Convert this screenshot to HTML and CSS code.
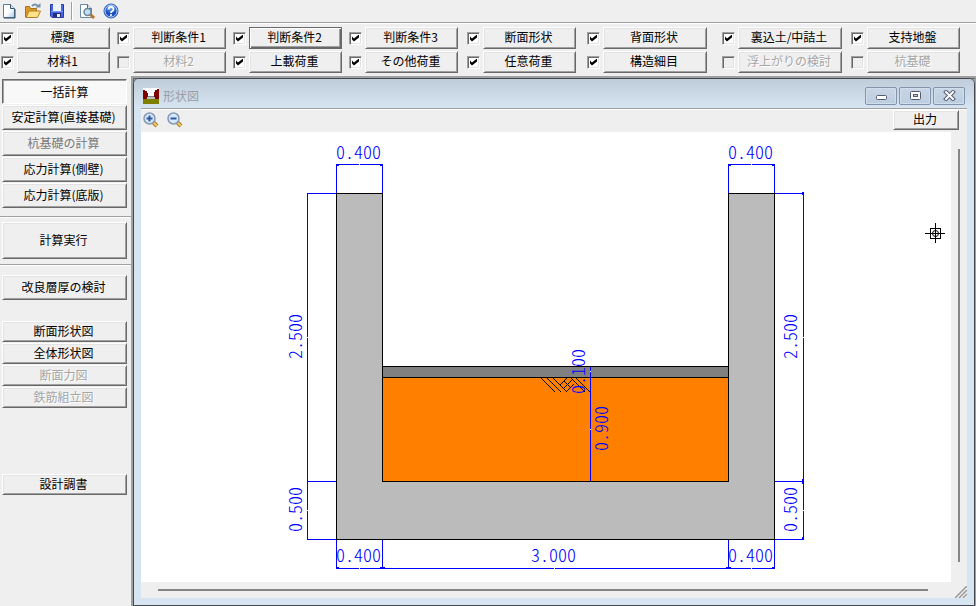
FILE: index.html
```html
<!DOCTYPE html>
<html lang="ja">
<head>
<meta charset="utf-8">
<title>形状図</title>
<link rel="stylesheet" href="styles.css">
</head>
<body>
<header class="toolbar">
  <button class="tool" aria-label="新規"><svg width="16" height="16" viewBox="0 0 16 16"><defs><linearGradient id="pg" x1="0" y1="0" x2="1" y2="1"><stop offset="0" stop-color="#fff"/><stop offset=".5" stop-color="#fff"/><stop offset="1" stop-color="#a9c6e4"/></linearGradient></defs><path d="M2.500 1.500h7l4 4v9h-11z" fill="url(#pg)" stroke="#5d7f9c"/><path d="M3 15h11V6" fill="none" stroke="#28465f"/><path d="M9.500 1.500v4h4" fill="#d7e8f5" stroke="#34546e"/></svg></button>
  <button class="tool" aria-label="開く"><svg width="16" height="16" viewBox="0 0 16 16"><path d="M.5 14V3.500h4l1 2h6V14z" fill="#d99a28" stroke="#a8721c"/><path d="M1 14.500 4 8h11.500l-3 6.500z" fill="#ffe188" stroke="#b67f22"/><path d="M7 3q3-3 6 0" fill="none" stroke="#7892a8" stroke-width="2"/><path d="M10.500 4.500h5V0z" fill="#7892a8"/></svg></button>
  <button class="tool" aria-label="保存"><svg width="16" height="16" viewBox="0 0 16 16"><path d="M1.500 1.500h13v13H3l-1.500-1.500z" fill="#4664e8" stroke="#283a9c"/><path d="M4 1h8v7H4z" fill="#eef4fc"/><path d="M2 8.500h12" stroke="#7994ff"/><path d="M4 10h8v4H4z" fill="#242e70"/><path d="M8 11h3v3H8z" fill="#e8eefb"/></svg></button>
  <span class="divider"></span>
  <button class="tool" aria-label="印刷プレビュー"><svg width="16" height="16" viewBox="0 0 16 16"><path d="M1.500 1.500h7l4 4v9h-11z" fill="#fcfdff" stroke="#6b8ba5"/><path d="M8.500 1.500v4h4" fill="#d7e8f5" stroke="#4c6b84"/><path d="m11 11 4 4" stroke="#bb7428" stroke-width="3"/><circle cx="8.500" cy="9" r="3.500" fill="#bee1f7" stroke="#6f8799" stroke-width="1.500"/></svg></button>
  <button class="tool" aria-label="ヘルプ"><svg width="16" height="16" viewBox="0 0 16 16"><defs><radialGradient id="hb" cy=".2"><stop offset="0" stop-color="#72b5ff"/><stop offset="1" stop-color="#174ec0"/></radialGradient></defs><circle cx="8" cy="8" r="7" fill="url(#hb)" stroke="#315caa"/><circle cx="8" cy="8" r="6" fill="none" stroke="#b9d6fb"/><path d="M5.500 6.500Q5.500 4 8 4t2.500 2.200Q10.500 7.500 9 8.200 8 8.800 8 10" fill="none" stroke="#fff" stroke-width="1.800"/><circle cx="8" cy="12" r="1.100" fill="#fff"/></svg></button>
</header>

<section class="conditions">
  <div class="cond"><input type="checkbox" aria-label="標題" checked><button class="btn">標題</button></div>
  <div class="cond"><input type="checkbox" aria-label="判断条件1" checked><button class="btn">判断条件1</button></div>
  <div class="cond"><input type="checkbox" aria-label="判断条件2" checked><button class="btn focused">判断条件2</button></div>
  <div class="cond"><input type="checkbox" aria-label="判断条件3" checked><button class="btn">判断条件3</button></div>
  <div class="cond"><input type="checkbox" aria-label="断面形状" checked><button class="btn">断面形状</button></div>
  <div class="cond wide"><input type="checkbox" aria-label="背面形状" checked><button class="btn">背面形状</button></div>
  <div class="cond wide"><input type="checkbox" aria-label="裏込土/中詰土" checked><button class="btn">裏込土/中詰土</button></div>
  <div class="cond"><input type="checkbox" aria-label="支持地盤" checked><button class="btn">支持地盤</button></div>
  <div class="cond"><input type="checkbox" aria-label="材料1" checked><button class="btn">材料1</button></div>
  <div class="cond"><input type="checkbox" aria-label="材料2" disabled><button class="btn" disabled>材料2</button></div>
  <div class="cond"><input type="checkbox" aria-label="上載荷重" checked><button class="btn">上載荷重</button></div>
  <div class="cond"><input type="checkbox" aria-label="その他荷重" checked><button class="btn">その他荷重</button></div>
  <div class="cond"><input type="checkbox" aria-label="任意荷重" checked><button class="btn">任意荷重</button></div>
  <div class="cond wide"><input type="checkbox" aria-label="構造細目" checked><button class="btn">構造細目</button></div>
  <div class="cond wide"><input type="checkbox" aria-label="浮上がりの検討" disabled><button class="btn" disabled>浮上がりの検討</button></div>
  <div class="cond"><input type="checkbox" aria-label="杭基礎" disabled><button class="btn" disabled>杭基礎</button></div>
</section>

<main class="workspace">
  <nav class="sidebar">
    <div class="group calc">
      <button class="btn pressed">一括計算</button>
      <button class="btn">安定計算(直接基礎)</button>
      <button class="btn inactive">杭基礎の計算</button>
      <button class="btn">応力計算(側壁)</button>
      <button class="btn">応力計算(底版)</button>
    </div>
    <div class="group run"><button class="btn">計算実行</button></div>
    <div class="group review"><button class="btn">改良層厚の検討</button></div>
    <div class="group figures">
      <button class="btn">断面形状図</button>
      <button class="btn">全体形状図</button>
      <button class="btn" disabled>断面力図</button>
      <button class="btn" disabled>鉄筋組立図</button>
    </div>
    <div class="group report"><button class="btn">設計調書</button></div>
  </nav>

  <div class="mdi">
    <section class="window">
      <header class="titlebar">
        <svg class="appicon" width="16" height="16" viewBox="0 0 16 16" shape-rendering="crispEdges"><path d="M0 0h16v16H0z" fill="#fff"/><path d="M0 2h2v1h2v2h1v4H4v2H0zM16 1h-2v1h-2v2h-1v5h1v2h4z" fill="#800000"/><path d="M4 9h8v2H4z" fill="#b9bec4"/><path d="M5 8h6v1H5z" fill="#80858b"/><path d="M0 11h16v5H0z" fill="#808000"/></svg>
        <h1>形状図</h1>
        <div class="winbtns">
          <button aria-label="最小化"><svg width="13" height="11" viewBox="0 0 13 11"><rect x="1.500" y="5.500" width="10" height="4" rx="1" fill="#fff" stroke="#535b70"/></svg></button>
          <button aria-label="最大化"><svg width="13" height="11" viewBox="0 0 13 11"><rect x="1.500" y="1.500" width="10" height="8" rx="1" fill="#fff" stroke="#535b70"/><rect x="4.500" y="4.500" width="4" height="2" fill="#b8cbe0" stroke="#535b70"/></svg></button>
          <button aria-label="閉じる"><svg width="13" height="11" viewBox="0 0 13 11"><path d="m3 2 7 7m0-7-7 7" stroke="#535b70" stroke-width="4" stroke-linecap="square"/><path d="m3 2 7 7m0-7-7 7" stroke="#fff" stroke-width="2" stroke-linecap="square"/></svg></button>
        </div>
      </header>
      <div class="client">
        <div class="viewbar">
          <button class="tool" aria-label="拡大"><svg width="16" height="16" viewBox="0 0 16 16"><path d="m10 10 4 4" stroke="#a87828" stroke-width="4"/><path d="m10 10 4 4" stroke="#f1cd5d" stroke-width="2"/><circle cx="6.500" cy="6.500" r="5.500" fill="#d5e9fc" stroke="#8598b4" stroke-width="1.500"/><path d="M3.500 6.500h6m-3-3v6" stroke="#31579c" stroke-width="2"/></svg></button>
          <button class="tool" aria-label="縮小"><svg width="16" height="16" viewBox="0 0 16 16"><path d="m10 10 4 4" stroke="#a87828" stroke-width="4"/><path d="m10 10 4 4" stroke="#f1cd5d" stroke-width="2"/><circle cx="6.500" cy="6.500" r="5.500" fill="#d5e9fc" stroke="#8598b4" stroke-width="1.500"/><path d="M3.500 6.500h6" stroke="#31579c" stroke-width="2"/></svg></button>
          <button class="btn output">出力</button>
        </div>
        <div class="view">
          <svg class="drawing" viewBox="141 132 810 450" role="img" aria-label="形状図">
            <g class="solid">
              <path class="concrete" d="M336.500 193.500h46v288h346v-288h46v346h-438z"/>
              <path class="slab" d="M382.500 366.500h346v11h-346z"/>
              <path class="fill" d="M382.500 377.500h346v104h-346z"/>
            </g>
            <path class="hatch" d="m541 378 14 14m-8-14 14 14m-8-14 14 14m4-14 14 14m-9-14 14 14M560 385l7-7m-4 11 9-9m-6 12 8-8m-14 1 6 6m-2-10 6 6"/>
            <g class="dims">
              <path d="M336.500 193v-28.500h46V193M728.500 193v-28.500h46V193"/>
              <path d="M336 193.500h-28.500v346H336M307 481.500h29"/>
              <path d="M775 193.500h28.500v346H775M775 481.500h29"/>
              <path d="M336.500 540v28.500h438V540M382.500 540v28M728.500 540v28"/>
              <path d="M590.500 367v114"/>
              <path class="ends" d="M336 165h3m41 0h3m345 0h3m41 0h3M336 568h3m41 0h5m341 0h5m41 0h3M803 195v-3m0 287v5m0 53v3"/>
            </g>
            <path class="breaks" d="M359 164.500h1m391 0h1M359 568.500h1m194 0h1m196 0h1M307.500 337v1m0 172v1M803.500 337v1m0 172v1M590.500 371v1m0 57v1"/>
            <g class="values">
              <text x="336" y="159">0.400</text><text x="728" y="159">0.400</text>
              <text x="336" y="562">0.400</text><text x="531" y="562">3.000</text><text x="728" y="562">0.400</text>
              <text transform="translate(302 359) rotate(-90)">2.500</text>
              <text transform="translate(302 532) rotate(-90)">0.500</text>
              <text transform="translate(797 359) rotate(-90)">2.500</text>
              <text transform="translate(797 532) rotate(-90)">0.500</text>
              <text transform="translate(585 394) rotate(-90)">0.100</text>
              <text transform="translate(608 451) rotate(-90)">0.900</text>
            </g>
            <path class="cursor" d="M925 233.500h20M935.500 223v20M930.500 228.500h10v10h-10z"/>
            <circle class="cursor" cx="935.500" cy="233.500" r="3"/>
          </svg>
          <div class="vscroll"></div>
          <div class="hscroll"></div>
          <svg class="grip" width="12" height="12" viewBox="0 0 12 12"><path d="M0 12 12 0M4 12l8-8M8 12l4-4" stroke="#999" stroke-width="1.500"/></svg>
        </div>
      </div>
    </section>
  </div>
</main>
</body>
</html>
```
FILE: styles.css
```css
* { box-sizing: border-box; }

body {
  margin: 0;
  min-height: 100vh;
  display: flex;
  flex-direction: column;
  background: #efefef;
  color: #000;
  font: 12px/16px "Liberation Sans", "Noto Sans CJK JP", sans-serif;
}

button { font: inherit; color: inherit; padding: 0; }

.btn {
  background: #efefef;
  border: 1px solid;
  border-color: #fff #696969 #696969 #fff;
  box-shadow: inset 1px 1px #e3e3e3, inset -1px -1px #a0a0a0;
  padding: 0 2px 2px 0;
  white-space: nowrap;
  font-family: "Noto Sans CJK JP", sans-serif;
  line-height: 16px;
}
.btn:disabled { color: #a5a5a5; text-shadow: 1px 1px #fff; }
.btn.inactive { color: #787878; }
.btn.focused {
  border-color: #696969;
  box-shadow: inset 1px 1px #fff, inset -1px -1px #696969, inset -2px -2px #a0a0a0;
}
.btn.pressed {
  padding: 0;
  background: #f8f8f8;
  border-color: #696969 #fff #fff #696969;
  box-shadow: inset 1px 1px #a0a0a0;
}

.tool { border: 0; background: none; width: 16px; height: 16px; }
.tool svg { display: block; }

.toolbar {
  height: 24px;
  flex: none;
  display: flex;
  align-items: center;
  gap: 8px;
  padding: 0 1px 2px;
  border-bottom: 1px solid #fff;
  box-shadow: inset 0 -1px #a0a0a0;
}
.divider { width: 2px; height: 18px; background: #a0a0a0; border-right: 1px solid #fff; margin: 0 -2px 0 -2px; }

.conditions {
  display: grid;
  grid-template-columns: 116fr 116fr 116fr 118fr 120fr 135fr 129fr 125fr;
  grid-auto-rows: 22px;
  row-gap: 2px;
  padding: 3px 0 3px 1px;
}
.cond { display: grid; grid-template-columns: 16px 93px; align-items: center; }
.cond.wide { grid-template-columns: 16px 104px; }
.cond .btn { height: 22px; }

input[type="checkbox"] {
  appearance: none;
  width: 13px;
  height: 13px;
  margin: 0;
  background: #fff;
  border: 1px solid;
  border-color: #a0a0a0 #fff #fff #a0a0a0;
  box-shadow: inset 1px 1px #696969, inset -1px -1px #e3e3e3;
}
input[type="checkbox"]:checked::before {
  content: "";
  display: block;
  width: 7px;
  height: 7px;
  margin: 2px;
  background: #000;
  clip-path: polygon(0 28%, 28% 58%, 100% 0, 100% 42%, 28% 100%, 0 72%);
}
input[type="checkbox"]:disabled { background: #efefef; }

.workspace { flex: 1; display: flex; }

.sidebar { width: 131px; flex: none; padding-top: 3px; }
.group { display: grid; padding: 0 4px 0 2px; }
.calc { grid-auto-rows: 25px; gap: 1px; padding-bottom: 8px; }
.run { grid-auto-rows: 37px; padding-top: 5px; padding-bottom: 5px; border: solid #a0a0a0; border-width: 1px 0; box-shadow: inset 0 1px #fff, 0 1px #fff; }
.review { grid-auto-rows: 25px; margin-top: 10px; }
.figures { grid-auto-rows: 21px; gap: 1px; margin-top: 21px; }
.report { grid-auto-rows: 21px; margin-top: 66px; }

.mdi {
  flex: 1;
  min-width: 0;
  display: flex;
  background: #a0a0a0;
  border: 2px solid #a0a0a0;
  border-right-width: 1px;
  border-bottom: 0;
  box-shadow: inset 1px 1px #696969;
}

.window {
  flex: 1;
  min-width: 0;
  display: flex;
  flex-direction: column;
  background: #d7e4f2;
  border: 1px solid #45474c;
  border-radius: 6px 6px 0 0;
  padding: 0 7px 7px;
}
.titlebar {
  height: 29px;
  flex: none;
  display: flex;
  align-items: center;
  gap: 4px;
  margin: 0 -7px;
  padding: 4px 9px 0;
  border-radius: 5px 5px 0 0;
  background: linear-gradient(#bfcddb, #d7e4f2);
}
.titlebar h1 { margin: 0; font: 12px/16px "Noto Sans CJK JP", sans-serif; color: #9a9da2; flex: 1; }
.winbtns { display: flex; gap: 2px; }
.winbtns button {
  width: 32px;
  height: 18px;
  display: grid;
  place-items: center;
  border: 1px solid #8493ad;
  border-radius: 2px;
  background: linear-gradient(#c8d6e6, #bccde0);
  box-shadow: inset 0 0 0 1px #d2deec;
}

.client { flex: 1; display: flex; flex-direction: column; background: #efefef; border-top: 1px solid #a0a0a0; }
.viewbar { height: 23px; flex: none; display: flex; align-items: center; gap: 8px; padding: 0 8px 2px 2px; border-top: 1px solid #fff; }
.output { width: 66px; height: 20px; margin-left: auto; }

.view {
  flex: 1;
  display: grid;
  grid-template-columns: 1fr 16px;
  grid-template-rows: 1fr 16px;
}
.drawing { width: 100%; height: 100%; min-height: 0; background: #fff; }
.vscroll { width: 2px; margin: 17px 0 20px 7px; background: #858585; }
.hscroll { height: 2px; margin: 7px 23px 0 17px; background: #858585; }
.grip { align-self: end; justify-self: end; }

.drawing path { fill: none; stroke-width: 1; shape-rendering: crispEdges; }
.drawing .solid path { stroke: #000; }
.drawing .solid .concrete { fill: #bbb; }
.drawing .solid .slab { fill: #808080; }
.drawing .solid .fill { fill: #ff8000; }
.drawing .hatch, .drawing .cursor { fill: none; stroke: #000; }
.dims path { stroke: #00f; }
.drawing .ends { stroke-width: 2; }
.drawing .breaks { stroke: #fff; }
.values { fill: #00f; font: 300 18px "Noto Sans CJK JP", monospace; font-feature-settings: "hwid"; }
```
